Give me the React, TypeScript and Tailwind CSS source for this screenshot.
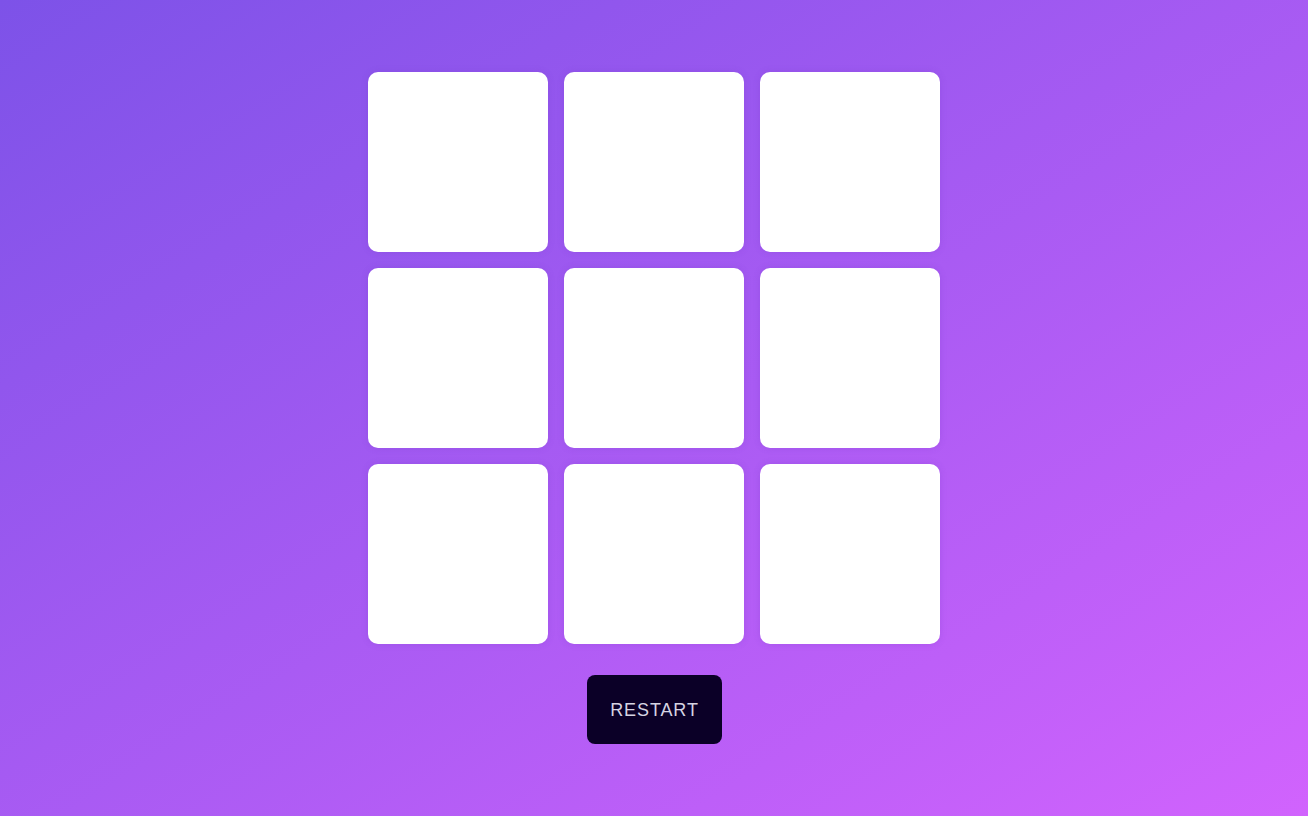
export default function App() {
  return (
    <div
      className="min-h-screen w-full flex flex-col items-center justify-center bg-[linear-gradient(to_bottom_right,#7d52e8,#d163fd)]"
      style={{ fontFamily: '"Liberation Sans", Arial, sans-serif' }}
    >
      <div className="grid grid-cols-[repeat(3,180px)] grid-rows-[repeat(3,180px)] gap-4">
        {Array.from({ length: 9 }).map((_, i) => (
          <div key={i} className="bg-white rounded-[10px] shadow-[0_0_6px_rgba(120,60,200,0.25)]" />
        ))}
      </div>
      <button className="mt-[31px] w-[135px] h-[69px] rounded-lg bg-[#0b0027] text-[#d6d4e2] text-[18px] leading-none tracking-[0.9px] pl-[1px]">
        RESTART
      </button>
    </div>
  );
}
